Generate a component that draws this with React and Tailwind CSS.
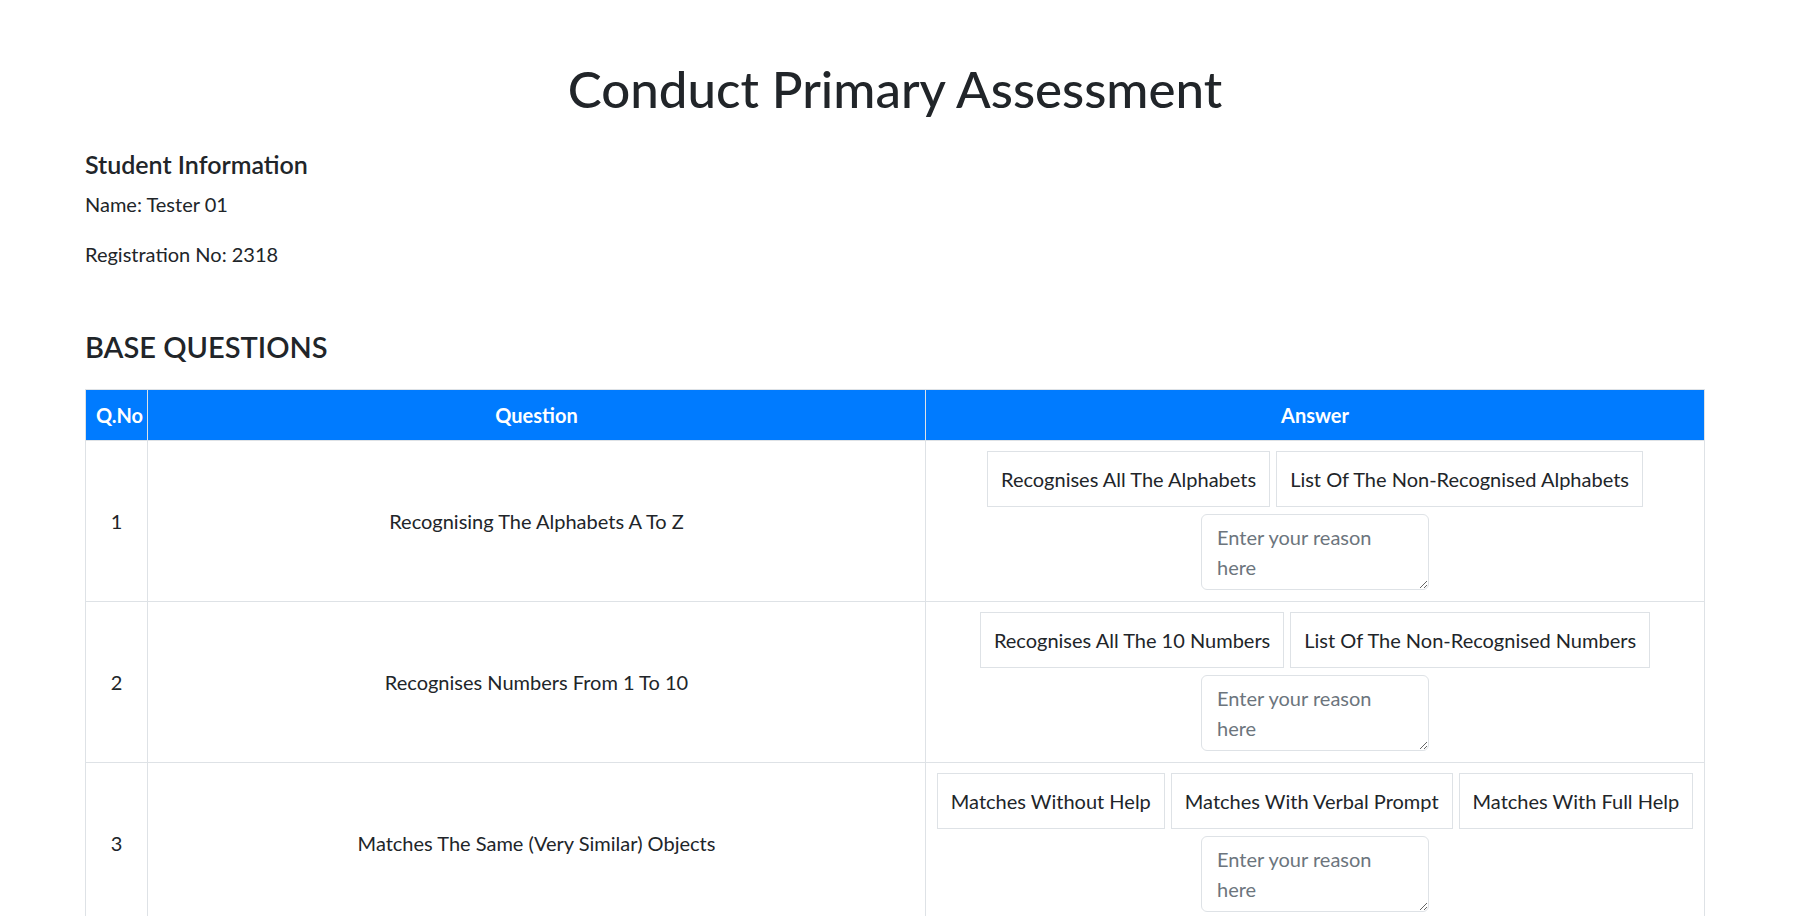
import React from "react";

const questions = [
  {
    no: 1,
    text: "Recognising The Alphabets A To Z",
    options: ["Recognises All The Alphabets", "List Of The Non-Recognised Alphabets"],
  },
  {
    no: 2,
    text: "Recognises Numbers From 1 To 10",
    options: ["Recognises All The 10 Numbers", "List Of The Non-Recognised Numbers"],
  },
  {
    no: 3,
    text: "Matches The Same (Very Similar) Objects",
    options: ["Matches Without Help", "Matches With Verbal Prompt", "Matches With Full Help"],
  },
];

const App = () => {
  return (
    <div className="h-[916px] overflow-hidden bg-white text-[#212529] font-['Lato',sans-serif] text-[20px] leading-[30px]">
      <div className="pl-[85px] pr-[96px] pt-[59px]">
        <h1 className="text-center text-[51px] leading-[60px] font-medium">Conduct Primary Assessment</h1>

        {/* Student info */}
        <h5 className="mt-[30px] text-[25px] leading-[30px] font-semibold">Student Information</h5>
        <p className="mt-[10px]">Name: Tester 01</p>
        <p className="mt-[20px]">Registration No: 2318</p>

        <h4 className="mt-[60px] text-[29px] leading-[36px] font-semibold">BASE QUESTIONS</h4>

        {/* Questions table */}
        <table className="mt-[24px] w-full border-collapse border border-[#dee2e6]">
          <thead>
            <tr className="bg-[#007bff] text-white">
              <th className="w-[62px] border border-[#dee2e6] pl-[8px] pr-[2px] py-[10px] font-bold">Q.No</th>
              <th className="border border-[#dee2e6] py-[10px] font-bold">Question</th>
              <th className="w-[779px] border border-[#dee2e6] py-[10px] font-bold">Answer</th>
            </tr>
          </thead>
          <tbody>
            {questions.map((q) => (
              <tr key={q.no}>
                <td className="border border-[#dee2e6] text-center align-middle">{q.no}</td>
                <td className="border border-[#dee2e6] text-center align-middle">{q.text}</td>
                <td className="border border-[#dee2e6] text-center align-middle pt-[10px] pb-[11px]">
                  <div className="flex flex-wrap justify-center gap-[6px]">
                    {q.options.map((opt) => (
                      <button
                        key={opt}
                        className="h-[56px] border border-[#dee2e6] bg-white px-[13px] text-[20px] leading-[30px] text-[#212529]"
                      >
                        {opt}
                      </button>
                    ))}
                  </div>
                  <textarea
                    placeholder="Enter your reason here"
                    className="mx-auto mt-[7px] block h-[76px] w-[228px] rounded-[6px] border border-[#dee2e6] px-[15px] py-[7px] text-[20px] leading-[30px] placeholder:text-[#6c757d] outline-none"
                  />
                </td>
              </tr>
            ))}
          </tbody>
        </table>
      </div>
    </div>
  );
};

export default App;
